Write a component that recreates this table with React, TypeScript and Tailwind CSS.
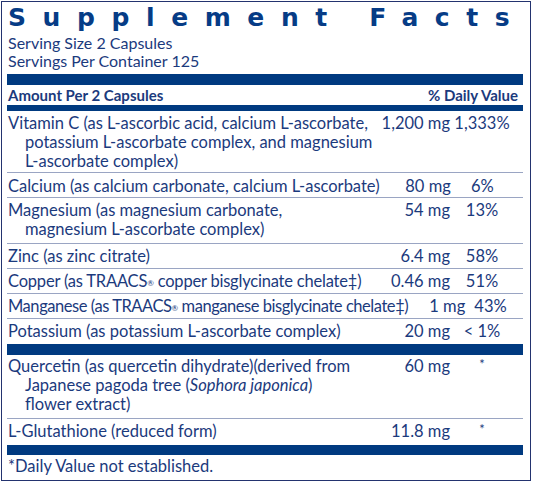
import React from "react";

type RowProps = {
  name: React.ReactNode;
  amount: string;
  dv: string;
  cls?: string;
  border?: boolean;
  star?: boolean;
  single?: boolean;
};

function Row({ name, amount, dv, cls = "pt-[3px] pb-[2px]", border = true, star = false, single = true }: RowProps) {
  return (
    <div className={`flex ${cls} ${border ? "border-b border-[#9aa5c3]" : ""}`}>
      <div className={`flex-1 pl-[18px] -indent-[17px] ${single ? "whitespace-nowrap" : ""}`}>{name}</div>
      <div className="w-[72px] text-right whitespace-nowrap">{amount}</div>
      <div className="w-[2px]" />
      <div className={`w-[60px] text-center whitespace-nowrap ${star ? "text-[13px] leading-[14px]" : ""}`}>{dv}</div>
      <div className="w-[11px]" />
    </div>
  );
}

const Reg = () => <sup className="text-[8px] relative -top-[1px]">®</sup>;

export default function App() {
  return (
    <div className="pl-[1px] pt-[1px] bg-white" style={{ fontFamily: "Lato, 'Liberation Sans', sans-serif" }}>
      <div className="w-[530px] h-[480px] border border-[#23336f] pl-[5px] pr-[7px] text-[#1b3a7d] text-[16.5px] leading-[19px]">
        <div
          className="h-[32px] pl-[1px] text-[25px] leading-[32px] font-bold text-[#063c86] tracking-[16.6px] whitespace-nowrap"
          style={{ fontFamily: "'DejaVu Sans', sans-serif" }}
        >
          Supplement&nbsp;Facts
        </div>
        <div className="pl-[1px] leading-[18px] text-[16px]">
          <div>Serving Size 2 Capsules</div>
          <div>Servings Per Container 125</div>
        </div>
        <div className="mt-[4px] h-[11px] bg-[#003a80]" />
        <div className="h-[20px] leading-[20px] flex justify-between font-bold text-[15px] pl-[1px] pr-[5px]">
          <span>Amount Per 2 Capsules</span>
          <span>% Daily Value</span>
        </div>
        <div className="h-[6px] bg-[#003a80]" />
        <Row
          cls="pt-[3px] pb-[1px]"
          single={false}
          name={
            <>
              Vitamin C (as L-ascorbic acid, calcium L-ascorbate,
              <br />
              potassium L-ascorbate complex, and magnesium
              <br />
              L-ascorbate complex)
            </>
          }
          amount="1,200 mg"
          dv="1,333%"
        />
        <Row cls="pt-[4px] pb-[1px]" name="Calcium (as calcium carbonate, calcium L-ascorbate)" amount="80 mg" dv="6%" />
        <Row
          cls="pt-[3px] pb-[4px]"
          single={false}
          name={
            <>
              Magnesium (as magnesium carbonate,
              <br />
              magnesium L-ascorbate complex)
            </>
          }
          amount="54 mg"
          dv="13%"
        />
        <Row name="Zinc (as zinc citrate)" amount="6.4 mg" dv="58%" />
        <Row
          name={
            <span className="tracking-[-0.2px]">
              Copper (as TRAACS<Reg /> copper bisglycinate chelate‡)
            </span>
          }
          amount="0.46 mg"
          dv="51%"
        />
        <Row
          name={
            <span className="tracking-[-0.45px]">
              Manganese (as TRAACS<Reg /> manganese bisglycinate chelate‡)
            </span>
          }
          amount="1 mg"
          dv="43%"
        />
        <Row name="Potassium (as potassium L-ascorbate complex)" amount="20 mg" dv="< 1%" border={false} cls="pt-[3px] pb-[3px]" />
        <div className="h-[11px] bg-[#003a80]" />
        <Row
          cls="pt-[2px] pb-[4px]"
          single={false}
          name={
            <>
              Quercetin (as quercetin dihydrate)(derived from
              <br />
              Japanese pagoda tree (<i>Sophora japonica</i>)
              <br />
              flower extract)
            </>
          }
          amount="60 mg"
          dv="*"
          star
        />
        <Row cls="pt-[3px] pb-[4px]" name="L-Glutathione (reduced form)" amount="11.8 mg" dv="*" border={false} star />
        <div className="h-[10px] bg-[#003a80]" />
        <div className="pt-[2px] pl-[1px]">*Daily Value not established.</div>
      </div>
    </div>
  );
}
